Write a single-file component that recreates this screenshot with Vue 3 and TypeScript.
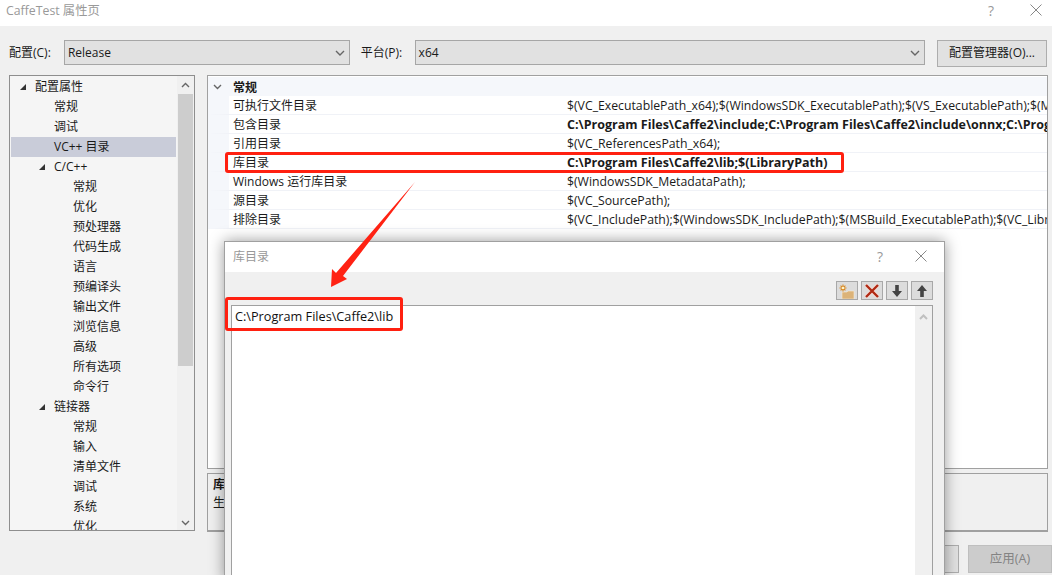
<script setup lang="ts">
interface TreeItem {
  label: string
  level: number
  open?: boolean
  active?: boolean
}

interface PropRow {
  name: string
  value: string
  bold?: boolean
}

const treeItems: TreeItem[] = [
  { label: '配置属性', level: 0, open: true },
  { label: '常规', level: 1 },
  { label: '调试', level: 1 },
  { label: 'VC++ 目录', level: 1, active: true },
  { label: 'C/C++', level: 1, open: true },
  { label: '常规', level: 2 },
  { label: '优化', level: 2 },
  { label: '预处理器', level: 2 },
  { label: '代码生成', level: 2 },
  { label: '语言', level: 2 },
  { label: '预编译头', level: 2 },
  { label: '输出文件', level: 2 },
  { label: '浏览信息', level: 2 },
  { label: '高级', level: 2 },
  { label: '所有选项', level: 2 },
  { label: '命令行', level: 2 },
  { label: '链接器', level: 1, open: true },
  { label: '常规', level: 2 },
  { label: '输入', level: 2 },
  { label: '清单文件', level: 2 },
  { label: '调试', level: 2 },
  { label: '系统', level: 2 },
  { label: '优化', level: 2 },
]

const propRows: PropRow[] = [
  { name: '可执行文件目录', value: '$(VC_ExecutablePath_x64);$(WindowsSDK_ExecutablePath);$(VS_ExecutablePath);$(MSBuild_ExecutablePath)' },
  { name: '包含目录', value: 'C:\\Program Files\\Caffe2\\include;C:\\Program Files\\Caffe2\\include\\onnx;C:\\Program Files\\Caffe2', bold: true },
  { name: '引用目录', value: '$(VC_ReferencesPath_x64);' },
  { name: '库目录', value: 'C:\\Program Files\\Caffe2\\lib;$(LibraryPath)', bold: true },
  { name: 'Windows 运行库目录', value: '$(WindowsSDK_MetadataPath);' },
  { name: '源目录', value: '$(VC_SourcePath);' },
  { name: '排除目录', value: '$(VC_IncludePath);$(WindowsSDK_IncludePath);$(MSBuild_ExecutablePath);$(VC_LibraryPath_x64);' },
]
</script>

<template>
  <div class="window">
    <header class="titlebar">
      <span class="title-text">CaffeTest 属性页</span>
      <span class="help">?</span>
      <svg class="close" width="12" height="12" viewBox="0 0 12 12"><path d="M.5.5l11 11M11.5.5l-11 11" /></svg>
    </header>

    <div class="config-row">
      <label class="config-label">配置(C):</label>
      <div class="combo combo-config">
        <span>Release</span>
        <svg width="10" height="6" viewBox="0 0 10 6"><path d="M1 1l4 4 4-4" /></svg>
      </div>
      <label class="config-label platform-label">平台(P):</label>
      <div class="combo combo-platform">
        <span>x64</span>
        <svg width="10" height="6" viewBox="0 0 10 6"><path d="M1 1l4 4 4-4" /></svg>
      </div>
      <button class="btn manager-btn">配置管理器(O)...</button>
    </div>

    <div class="main">
      <aside class="tree">
        <ul class="tree-list">
          <li
            v-for="(item, i) in treeItems"
            :key="i"
            class="tree-item"
            :class="[`level-${item.level}`, { active: item.active }]"
          >
            <i v-if="item.open" class="tree-arrow"></i>
            {{ item.label }}
          </li>
        </ul>
        <div class="scrollbar">
          <svg class="chev" width="9" height="6" viewBox="0 0 9 6"><path d="M1 5l3.5-3.5L8 5" /></svg>
          <div class="thumb"></div>
          <svg class="chev chev-down" width="9" height="6" viewBox="0 0 9 6"><path d="M1 1l3.5 3.5L8 1" /></svg>
        </div>
      </aside>

      <section class="right">
        <div class="grid">
          <div class="grid-head">
            <svg class="grid-toggle" width="9" height="6" viewBox="0 0 9 6"><path d="M1 1l3.5 3.5L8 1" /></svg>
            <span>常规</span>
          </div>
          <div v-for="row in propRows" :key="row.name" class="grid-row">
            <span class="prop-name">{{ row.name }}</span>
            <span class="prop-value" :class="{ bold: row.bold }">{{ row.value }}</span>
          </div>
        </div>
        <div class="desc">
          <strong>库目录</strong>
          <span>生成 VC++ 项目期间使用的库文件路径。</span>
        </div>
      </section>
    </div>

    <footer class="footer">
      <button class="btn foot-btn">取消</button>
      <button class="btn foot-btn disabled">应用(A)</button>
    </footer>

    <div class="dialog">
      <div class="dialog-title">
        <span class="dialog-name">库目录</span>
        <span class="help dialog-help">?</span>
        <svg class="close" width="12" height="12" viewBox="0 0 12 12"><path d="M.5.5l11 11M11.5.5l-11 11" /></svg>
      </div>
      <div class="dialog-body">
        <div class="dialog-tools">
          <button class="tool">
            <svg width="18" height="16" viewBox="0 0 18 16">
              <path d="M4 9h5l1-1h6v8H4z" fill="#dcb378" stroke="#f6ecd9" stroke-width=".6" />
              <path d="M5 1.5v7M1.5 5h7M2.6 2.6l4.8 4.8M7.4 2.6L2.6 7.4" stroke="#d9861c" stroke-width="1.1" fill="none" />
              <circle cx="5" cy="5" r="1.3" fill="#fff3c9" />
            </svg>
          </button>
          <button class="tool">
            <svg width="16" height="16" viewBox="0 0 16 16">
              <path d="M2 2l12 12M14 2L2 14" stroke="#f3ddd6" stroke-width="4" fill="none" />
              <path d="M2 2l12 12M14 2L2 14" stroke="#b02a14" stroke-width="2.4" fill="none" />
            </svg>
          </button>
          <button class="tool">
            <svg width="12" height="14" viewBox="0 0 12 14"><path d="M4.2 1h3.6v6H11l-5 6-5-6h3.2z" fill="#444" /></svg>
          </button>
          <button class="tool">
            <svg width="12" height="14" viewBox="0 0 12 14"><path d="M4.2 13h3.6V7H11L6 1 1 7h3.2z" fill="#444" /></svg>
          </button>
        </div>
        <div class="dir-list">
          <div class="dir-text">C:\Program Files\Caffe2\lib</div>
          <div class="dir-scroll">
            <svg width="9" height="6" viewBox="0 0 9 6"><path d="M1 5l3.5-3.5L8 5" /></svg>
          </div>
        </div>
      </div>
    </div>

    <div class="mark mark-row"></div>
    <div class="mark mark-list"></div>
    <svg class="pointer" width="100" height="120" viewBox="0 0 100 120">
      <path d="M91 0L19 94l4 3-16 8 1-18 4 4z" fill="#ff2213" />
    </svg>
  </div>
</template>

<style>
html,
body {
  margin: 0;
  overflow: hidden;
}
</style>

<style scoped>
.window {
  position: relative;
  display: flex;
  flex-direction: column;
  width: 1052px;
  height: 575px;
  overflow: hidden;
  background: #f0f0f0;
  color: #1a1a1a;
  font-family: "Open Sans", "Noto Sans CJK SC", sans-serif;
  font-size: 12px;
}

.titlebar {
  display: flex;
  align-items: center;
  height: 26px;
  flex-shrink: 0;
  box-sizing: border-box;
  background: #fff;
  padding: 0 10px 6px 6px;
}

.title-text {
  flex: 1;
  color: #999;
  font-size: 12.3px;
}

.help {
  color: #999;
  font-size: 14px;
  margin-right: 36px;
}

.close path {
  stroke: #888;
  fill: none;
}

.config-row {
  display: flex;
  align-items: flex-start;
  height: 27px;
  margin-top: 14px;
  padding: 0 5px 0 9px;
  flex-shrink: 0;
}

.config-label {
  width: 55px;
  line-height: 25px;
}

.platform-label {
  width: 54px;
  margin-left: 11px;
}

.combo {
  display: flex;
  align-items: center;
  justify-content: space-between;
  height: 25px;
  box-sizing: border-box;
  padding: 0 4px 0 3px;
  border: 1px solid #a6a6a6;
  background: #e1e1e1;
}

.combo svg path,
.chev path,
.grid-toggle path {
  fill: none;
  stroke: #666;
  stroke-width: 1.4;
}

.combo-config {
  width: 286px;
}

.combo-platform {
  width: 511px;
  margin-right: 12px;
}

.btn {
  height: 27px;
  box-sizing: border-box;
  border: 1px solid #adadad;
  background: #e1e1e1;
  color: #1a1a1a;
  font: inherit;
  padding: 0;
}

.manager-btn {
  width: 110px;
  padding-bottom: 3px;
}

.main {
  display: flex;
  gap: 12px;
  height: 457px;
  margin-top: 8px;
  padding: 0 4px 0 9px;
  flex-shrink: 0;
}

.tree {
  display: flex;
  align-self: flex-start;
  width: 186px;
  height: 456px;
  flex-shrink: 0;
  box-sizing: border-box;
  border: 1px solid #8e8e8e;
  background: #f5f5f5;
  overflow: hidden;
}

.tree-list {
  flex: 1;
  margin: 0;
  padding: 1px 1px 0;
  list-style: none;
  min-width: 0;
}

.tree-item {
  position: relative;
  height: 20px;
  line-height: 20px;
  white-space: nowrap;
}

.level-0 {
  padding-left: 24px;
}

.level-1 {
  padding-left: 43px;
}

.level-2 {
  padding-left: 62px;
}

.tree-item.active {
  background: #c9ccd9;
}

.tree-arrow {
  position: absolute;
  top: 7px;
  width: 0;
  height: 0;
  border-style: solid;
  border-width: 0 0 6px 6px;
  border-color: transparent transparent #333 transparent;
}

.level-0 .tree-arrow {
  left: 9px;
}

.level-1 .tree-arrow {
  left: 28px;
}

.scrollbar {
  display: flex;
  flex-direction: column;
  align-items: center;
  width: 17px;
  flex-shrink: 0;
  background: #f0f0f0;
  padding-top: 6px;
  box-sizing: border-box;
}

.thumb {
  width: 15px;
  height: 272px;
  margin-top: 6px;
  background: #cdcdcd;
}

.chev-down {
  margin-top: auto;
  margin-bottom: 4px;
}

.right {
  display: flex;
  flex-direction: column;
  flex: 1;
  min-width: 0;
  gap: 4px;
}

.grid {
  height: 394px;
  flex-shrink: 0;
  box-sizing: border-box;
  border: 1px solid #a0a0a0;
  background: #fff;
  overflow: hidden;
}

.grid-head {
  display: flex;
  align-items: center;
  height: 19px;
  margin-top: 1px;
  background: #f5f7fb;
  font-weight: 700;
}

.grid-toggle {
  margin: 0 11px 0 5px;
}

.grid-row {
  display: flex;
  height: 19px;
  line-height: 20px;
  box-sizing: border-box;
  border-bottom: 1px solid #f0f2f7;
  border-left: 21px solid #f5f7fb;
  white-space: nowrap;
}

.prop-name {
  width: 334px;
  flex-shrink: 0;
  padding-left: 4px;
  box-sizing: border-box;
}

.prop-value {
  font-size: 12.25px;
  padding-left: 4px;
}

.prop-value.bold {
  font-size: 12.5px;
  font-weight: 700;
}

.desc {
  display: flex;
  flex-direction: column;
  height: 59px;
  box-sizing: border-box;
  padding: 1px 5px;
  border: 1px solid #a0a0a0;
  border-bottom-width: 2px;
}

.footer {
  display: flex;
  justify-content: flex-end;
  gap: 9px;
  margin-top: 13px;
}

.foot-btn {
  width: 84px;
  height: 28px;
}

.foot-btn.disabled {
  border-color: #bfbfbf;
  background: #ccc;
  color: #838383;
  font-size: 12.5px;
  padding-bottom: 3px;
}

.dialog {
  position: absolute;
  left: 224px;
  top: 241px;
  display: flex;
  flex-direction: column;
  width: 721px;
  height: 340px;
  box-sizing: border-box;
  border: 1px solid #a0a0a0;
  background: #f0f0f0;
  box-shadow: 0 0 14px rgba(0, 0, 0, 0.4);
}

.dialog-title {
  display: flex;
  align-items: center;
  height: 30px;
  flex-shrink: 0;
  box-sizing: border-box;
  padding: 0 17px 2px 8px;
  background: #fff;
}

.dialog-name {
  flex: 1;
  color: #999;
}

.dialog-help {
  margin-right: 32px;
}

.dialog-body {
  display: flex;
  flex-direction: column;
  flex: 1;
  padding: 9px 11px 0 6px;
}

.dialog-tools {
  display: flex;
  justify-content: flex-end;
  gap: 3px;
  height: 19px;
  margin-bottom: 5px;
}

.tool {
  display: flex;
  align-items: center;
  justify-content: center;
  width: 22px;
  height: 19px;
  padding: 0;
  box-sizing: border-box;
  border: 1px solid #a8a8a8;
  background: #dcdcdc;
}

.dir-list {
  display: flex;
  flex: 1;
  border: 1px solid #a0a0a0;
  background: #fff;
}

.dir-text {
  flex: 1;
  padding: 0 3px;
  line-height: 20px;
  font-size: 12.7px;
  color: #111;
}

.dir-scroll {
  display: flex;
  justify-content: center;
  width: 17px;
  padding-top: 8px;
  box-sizing: border-box;
  background: #f0f0f0;
}

.dir-scroll path {
  fill: none;
  stroke: #c0c0c0;
  stroke-width: 2;
}

.mark {
  position: absolute;
  box-sizing: border-box;
  border: 3px solid #ff2010;
  border-radius: 3px;
}

.mark-row {
  left: 225px;
  top: 152px;
  width: 619px;
  height: 21px;
}

.mark-list {
  left: 225px;
  top: 297px;
  width: 178px;
  height: 34px;
}

.pointer {
  position: absolute;
  left: 324px;
  top: 182px;
}
</style>
